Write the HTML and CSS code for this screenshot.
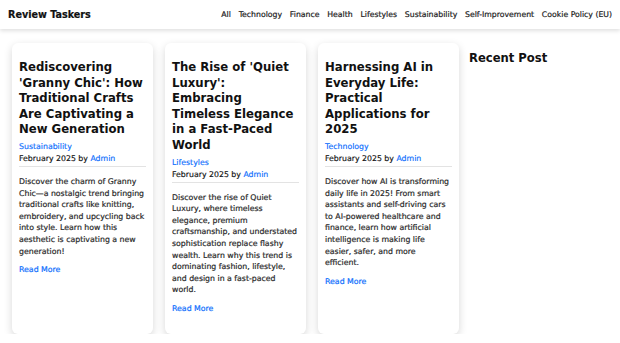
FILE: index.html
```html
<!DOCTYPE html>
<html lang="en">
<head>
<meta charset="utf-8">
<title>Review Taskers</title>
<link rel="stylesheet" href="styles.css">
</head>
<body>
<header class="site-header">
  <a class="brand" href="#">Review Taskers</a>
  <nav class="nav">
    <a href="#">All</a>
    <a href="#">Technology</a>
    <a href="#">Finance</a>
    <a href="#">Health</a>
    <a href="#">Lifestyles</a>
    <a href="#">Sustainability</a>
    <a href="#">Self-Improvement</a>
    <a href="#">Cookie Policy (EU)</a>
  </nav>
</header>
<main class="layout">
  <section class="posts">
    <article class="card">
      <h2 class="card-title">Rediscovering 'Granny Chic': How Traditional Crafts Are Captivating a New Generation</h2>
      <a class="cat" href="#">Sustainability</a>
      <p class="meta">February 2025 by <a href="#">Admin</a></p>
      <p class="excerpt">Discover the charm of Granny Chic—a nostalgic trend bringing traditional crafts like knitting, embroidery, and upcycling back into style. Learn how this aesthetic is captivating a new generation!</p>
      <a class="more" href="#">Read More</a>
    </article>
    <article class="card">
      <h2 class="card-title">The Rise of 'Quiet Luxury': Embracing Timeless Elegance in a Fast-Paced World</h2>
      <a class="cat" href="#">Lifestyles</a>
      <p class="meta">February 2025 by <a href="#">Admin</a></p>
      <p class="excerpt">Discover the rise of Quiet Luxury, where timeless elegance, premium craftsmanship, and understated sophistication replace flashy wealth. Learn why this trend is dominating fashion, lifestyle, and design in a fast-paced world.</p>
      <a class="more" href="#">Read More</a>
    </article>
    <article class="card">
      <h2 class="card-title">Harnessing AI in Everyday Life: Practical Applications for 2025</h2>
      <a class="cat" href="#">Technology</a>
      <p class="meta">February 2025 by <a href="#">Admin</a></p>
      <p class="excerpt">Discover how AI is transforming daily life in 2025! From smart assistants and self-driving cars to AI-powered healthcare and finance, learn how artificial intelligence is making life easier, safer, and more efficient.</p>
      <a class="more" href="#">Read More</a>
    </article>
  </section>
  <aside class="sidebar">
    <h2 class="side-title">Recent Post</h2>
  </aside>
</main>
</body>
</html>
```

FILE: styles.css
```css
* { box-sizing: border-box; }
html, body {
  margin: 0;
  padding: 0;
  background: #fff;
  font-family: "DejaVu Sans", Verdana, sans-serif;
  color: #212529;
}
a { text-decoration: none; color: #0d6efd; }

.site-header {
  height: 29px;
  display: flex;
  align-items: center;
  justify-content: space-between;
  padding: 0 8px;
  background: #fff;
  box-shadow: 0 2px 4px rgba(0,0,0,0.12);
  position: relative;
  z-index: 1;
}
.brand {
  font-weight: bold;
  font-size: 9.6px;
  color: #111;
  -webkit-text-stroke: 0.2px #111;
}
.nav {
  display: flex;
  gap: 7.75px;
  font-size: 7.75px;
}
.nav a {
  color: #222;
  -webkit-text-stroke: 0.2px #222;
}

.layout {
  display: flex;
  align-items: flex-start;
  padding: 14px 0 0 12px;
}
.posts {
  display: grid;
  grid-template-columns: 141px 141px 141px;
  column-gap: 12px;
}
.card {
  background: #fff;
  border-radius: 6px;
  box-shadow: 0 3px 8px rgba(0,0,0,0.16);
  padding: 17px 7px 19px;
  display: flex;
  flex-direction: column;
  align-items: flex-start;
}
.card-title {
  margin: 0 0 3px;
  font-size: 11.7px;
  line-height: 15.6px;
  font-weight: bold;
  color: #111;
}
.cat {
  font-size: 7.8px;
  line-height: 12px;
  -webkit-text-stroke: 0.15px #0d6efd;
}
.meta {
  margin: 0;
  width: 100%;
  font-size: 7.8px;
  line-height: 12px;
  color: #111;
  padding-bottom: 1px;
  border-bottom: 1px solid #e3e3e3;
  -webkit-text-stroke: 0.15px #111;
}
.meta a { -webkit-text-stroke: 0.15px #0d6efd; }
.excerpt {
  margin: 9px 0 7px;
  font-size: 7.8px;
  line-height: 11.6px;
  color: #2a2a2a;
  -webkit-text-stroke: 0.2px #2a2a2a;
}
.more {
  font-size: 7.8px;
  line-height: 12px;
  -webkit-text-stroke: 0.2px #0d6efd;
}
.sidebar {
  margin-left: 10px;
  padding-top: 8px;
}
.side-title {
  margin: 0;
  font-size: 11.6px;
  line-height: 15.6px;
  font-weight: bold;
  color: #111;
}
```
